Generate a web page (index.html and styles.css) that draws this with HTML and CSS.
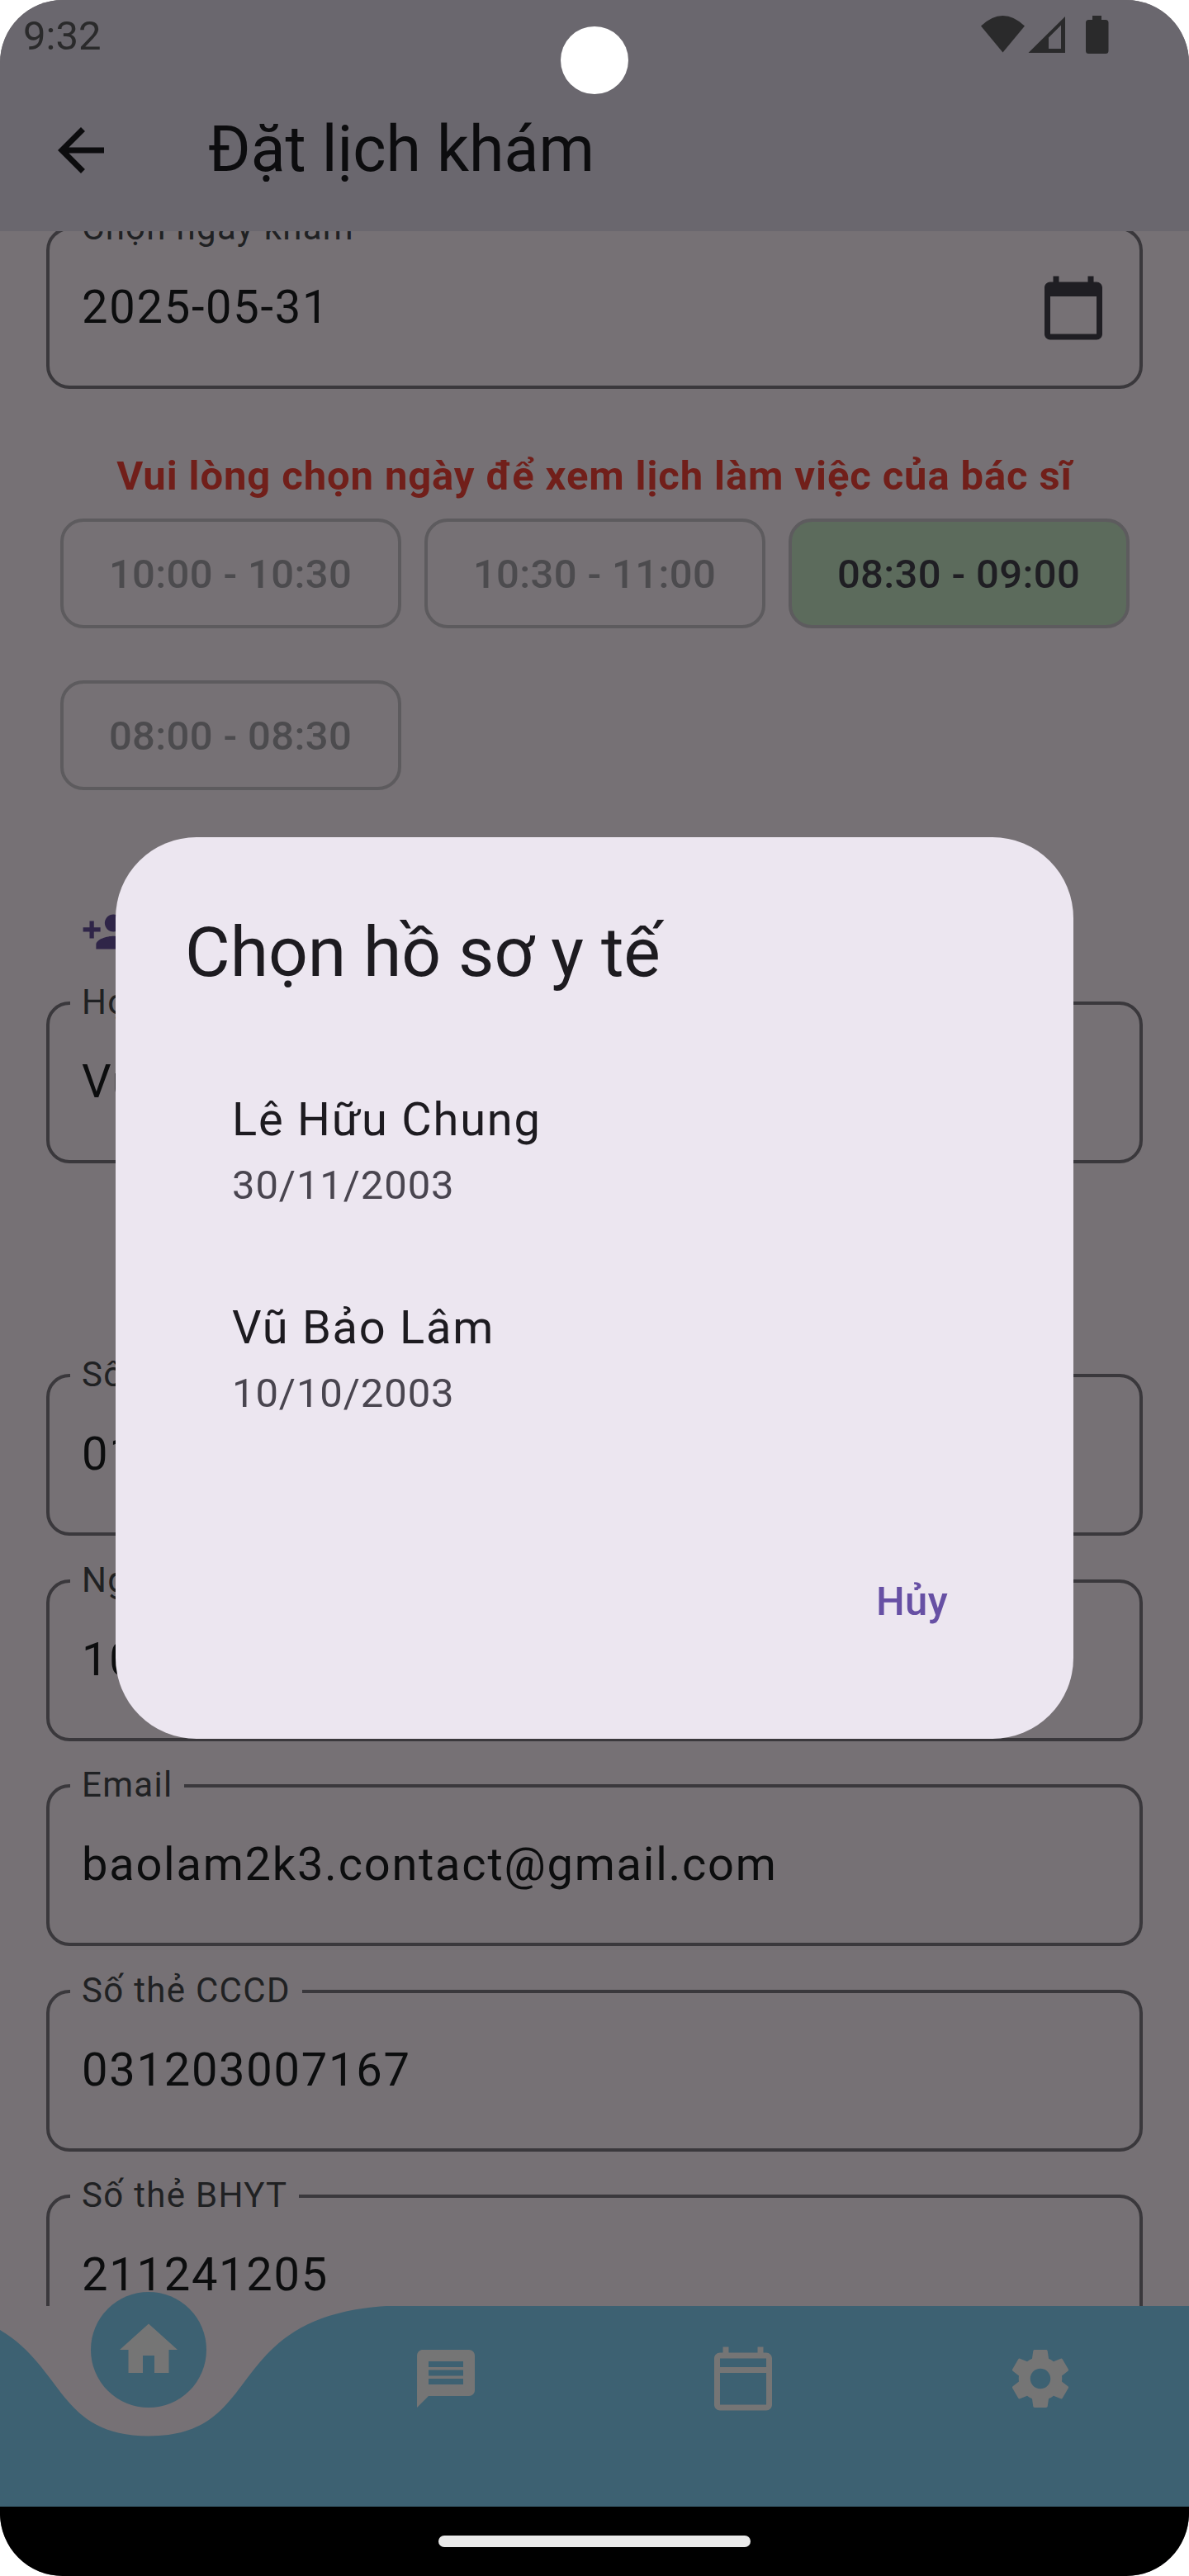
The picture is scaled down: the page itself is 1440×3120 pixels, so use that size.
FILE: index.html
```html
<!DOCTYPE html>
<html lang="vi">
<head>
<meta charset="utf-8">
<title>Đặt lịch khám</title>
<link rel="stylesheet" href="styles.css">
</head>
<body>
<div class="screen">
  <header class="top">
    <div class="status">
      <span class="clock">9:32</span>
      <svg class="status-icons" viewBox="0 0 160 50" width="160" height="50">
        <path d="M0 13.500Q26.500 -11.500 53 13.500L26.500 45.500Z"/>
        <path fill-rule="evenodd" d="M57.500 46H102V2ZM82 27.500V41H97V12.500Z"/>
        <path d="M135 1h11v5h5q3.500 0 3.500 3.500v34q0 3.500-3.500 3.500h-20.500q-3.500 0-3.500-3.500v-34q0-3.500 3.500-3.500h4.500z"/>
      </svg>
      <i class="camera"></i>
    </div>
    <div class="appbar">
      <svg class="icon" viewBox="0 0 24 24"><path d="M20 11H7.830l5.590-5.590L12 4l-8 8 8 8 1.410-1.410L7.830 13H20v-2z"/></svg>
      <h1>Đặt lịch khám</h1>
    </div>
  </header>

  <main class="form">
    <div class="field date"><label>Chọn ngày khám</label><span>2025-05-31</span>
      <svg class="icon" viewBox="0 0 24 24"><path d="M20 3h-1V1h-2v2H7V1H5v2H4c-1.100 0-2 .9-2 2v16c0 1.100.9 2 2 2h16c1.100 0 2-.9 2-2V5c0-1.100-.9-2-2-2zm0 18H4V8h16v13z"/></svg>
    </div>
    <p class="notice">Vui lòng chọn ngày để xem lịch làm việc của bác sĩ</p>
    <div class="slots">
      <button>10:00 - 10:30</button>
      <button>10:30 - 11:00</button>
      <button class="selected">08:30 - 09:00</button>
      <button>08:00 - 08:30</button>
    </div>
    <div class="pick-profile">
      <svg viewBox="0 0 24 24"><path d="M15 12c2.210 0 4-1.790 4-4s-1.790-4-4-4-4 1.790-4 4 1.790 4 4 4zm-9-2V7H4v3H1v2h3v3h2v-3h3v-2H6zm9 4c-2.670 0-8 1.340-8 4v2h16v-2c0-2.660-5.330-4-8-4z"/></svg>
    </div>
    <div class="field name"><label>Họ và tên</label><span>Vũ Bảo Lâm</span></div>
    <div class="fields">
      <div class="field"><label>Số điện thoại</label><span>01</span></div>
      <div class="field"><label>Ngày sinh</label><span>10/10/2003</span></div>
      <div class="field"><label>Email</label><span>baolam2k3.contact@gmail.com</span></div>
      <div class="field"><label>Số thẻ CCCD</label><span>031203007167</span></div>
      <div class="field"><label>Số thẻ BHYT</label><span>211241205</span></div>
    </div>
  </main>

  <nav class="tabs">
    <svg class="wave" viewBox="0 0 1440 243"><path d="M-108 0C93.600 13.100 36 157.500 180 157.500S266.400 13.100 468 0H1440V243H-108Z"/></svg>
    <a class="active"><svg class="icon" viewBox="0 0 24 24"><path d="M10 20v-6h4v6h5v-8h3L12 3 2 12h3v8z"/></svg></a>
    <a><svg class="icon" viewBox="0 0 24 24"><path d="M20 2H4c-1.100 0-1.990.9-1.990 2L2 22l4-4h14c1.100 0 2-.9 2-2V4c0-1.100-.9-2-2-2zm-2 12H6v-2h12v2zm0-3H6V9h12v2zm0-3H6V6h12v2z"/></svg></a>
    <a><svg class="icon" viewBox="0 0 24 24"><path d="M20 3h-1V1h-2v2H7V1H5v2H4c-1.100 0-2 .9-2 2v16c0 1.100.9 2 2 2h16c1.100 0 2-.9 2-2V5c0-1.100-.9-2-2-2zm0 2v3H4V5h16zM4 21V10h16v11H4z"/></svg></a>
    <a><svg class="icon" viewBox="0 0 24 24"><path d="M19.430 12.980c.04-.32.07-.64.07-.98s-.03-.66-.07-.98l2.110-1.650c.19-.15.24-.42.12-.64l-2-3.460c-.12-.22-.39-.3-.61-.22l-2.490 1c-.52-.4-1.080-.73-1.690-.98l-.38-2.650C14.460 2.180 14.250 2 14 2h-4c-.25 0-.46.18-.49.42l-.38 2.650c-.61.25-1.170.59-1.690.98l-2.490-1c-.23-.09-.49 0-.61.22l-2 3.460c-.13.22-.07.49.12.64l2.110 1.650c-.04.32-.07.65-.07.98s.03.66.07.98l-2.110 1.650c-.19.15-.24.42-.12.64l2 3.460c.12.22.39.3.61.22l2.490-1c.52.4 1.080.73 1.690.98l.38 2.650c.03.24.24.42.49.42h4c.25 0 .46-.18.49-.42l.38-2.650c.61-.25 1.170-.59 1.690-.98l2.490 1c.23.09.49 0 .61-.22l2-3.460c.12-.22.07-.49-.12-.64l-2.110-1.650zM12 15.500c-1.930 0-3.500-1.570-3.500-3.500s1.570-3.500 3.500-3.500 3.500 1.570 3.500 3.500-1.570 3.500-3.500 3.500z"/></svg></a>
  </nav>
  <footer class="gesture"><i></i></footer>

  <section class="dialog" role="dialog">
    <h2>Chọn hồ sơ y tế</h2>
    <ul>
      <li><b>Lê Hữu Chung</b><span>30/11/2003</span></li>
      <li><b>Vũ Bảo Lâm</b><span>10/10/2003</span></li>
    </ul>
    <button>Hủy</button>
  </section>
</div>
</body>
</html>
```

FILE: styles.css
```css
* { box-sizing: border-box; }
body { margin: 0; background: #fff; font-family: Roboto, sans-serif; }
h1, h2, p, ul { margin: 0; padding: 0; font-weight: 400; }
button { font: inherit; padding: 0; background: none; border: 0; }
svg { display: block; fill: currentColor; flex: none; }
.icon { width: 84px; height: 84px; }

.screen {
  position: relative;
  width: 1440px;
  height: 3120px;
  display: flex;
  flex-direction: column;
  overflow: hidden;
  border-radius: 76px;
  background: #767175;
}

.top { height: 280px; flex: none; background: #6a676e; color: #0c0c0e; position: relative; z-index: 1; }
.status { height: 84px; display: flex; justify-content: space-between; padding: 18px 92px 0 28px; color: #2a2a2b; }
.clock { font-size: 49px; line-height: 52px; }
.camera { position: absolute; left: 679px; top: 32px; width: 82px; height: 82px; border-radius: 50%; background: #fff; }
.appbar { height: 196px; display: flex; align-items: center; gap: 112px; padding: 0 56px; }
h1 { font-size: 77px; line-height: 98px; padding-bottom: 3px; }

.form { height: 2513px; flex: none; overflow: hidden; padding: 0 56px; display: flow-root; }
.field {
  position: relative;
  height: 196px;
  padding: 0 38px 0 39px;
  border: 4px solid #3a383c;
  border-radius: 28px;
  display: flex;
  align-items: center;
  justify-content: space-between;
  color: #0c0d0e;
  font-size: 56px;
  letter-spacing: 1.75px;
}
.field span { padding-bottom: 2px; }
.field label {
  position: absolute;
  left: 25px;
  top: -28px;
  padding: 0 14px;
  background: #767175;
  color: #202123;
  font-size: 42px;
  line-height: 50px;
  letter-spacing: 1.3px;
}
.date { margin-top: -5.5px; }
.date .icon { color: #1f1e23; }
.notice { margin-top: 71px; text-align: center; font-size: 49px; line-height: 70px; font-weight: 700; letter-spacing: .875px; color: #711f1a; }
.slots { display: grid; grid-template-columns: repeat(3, 413px); gap: 63px 28px; padding: 16px 0 0 16.5px; }
.slots button { height: 133px; padding-top: 2px; border: 4px solid #5d5b5e; border-radius: 28px; color: #4c4b4e; font-size: 49px; font-weight: 500; letter-spacing: .35px; }
.slots .selected { background: #5c6b5c; color: #1f1e23; }
.pick-profile { margin-top: 140.5px; padding-left: 42px; color: #2f2548; }
.pick-profile svg { width: 63px; height: 63px; }
.name { margin-top: 52.5px; }
.fields { margin-top: 255.5px; display: grid; gap: 52.5px; }

.tabs { position: relative; height: 243px; flex: none; display: grid; grid-template-columns: repeat(4, 1fr); color: #757575; }
.wave { position: absolute; left: 0; top: 0; width: 1440px; height: 243px; color: #3d6172; }
.tabs a { position: relative; display: flex; justify-content: center; padding-top: 46px; }
.tabs .active { justify-self: center; width: 140px; height: 140px; margin-top: -17.5px; padding: 0; align-items: center; border-radius: 50%; background: #3d6172; }
.gesture { height: 84px; flex: none; background: #000; padding-top: 35px; }
.gesture i { display: block; width: 378px; height: 14px; margin: 0 auto; border-radius: 7px; background: #eaeaea; }

.dialog {
  position: absolute;
  z-index: 2;
  left: 140px;
  top: 1014px;
  width: 1160px;
  height: 1091.5px;
  padding: 84px;
  border-radius: 98px;
  background: #ece6f0;
  color: #1d1b20;
  display: flex;
  flex-direction: column;
}
h2 { font-size: 84px; line-height: 112px; }
.dialog ul { list-style: none; padding: 56px 57px 0; }
.dialog li { height: 252px; display: flex; flex-direction: column; justify-content: center; gap: 3px; }
.dialog b { font-weight: 400; font-size: 56px; line-height: 84px; letter-spacing: 1.75px; }
.dialog li span { font-size: 49px; line-height: 70px; letter-spacing: .875px; color: #49454f; }
.dialog button { align-self: flex-end; margin: 135px 68px 0 0; font-size: 49px; line-height: 70px; font-weight: 500; letter-spacing: .35px; color: #6750a4; }
```
